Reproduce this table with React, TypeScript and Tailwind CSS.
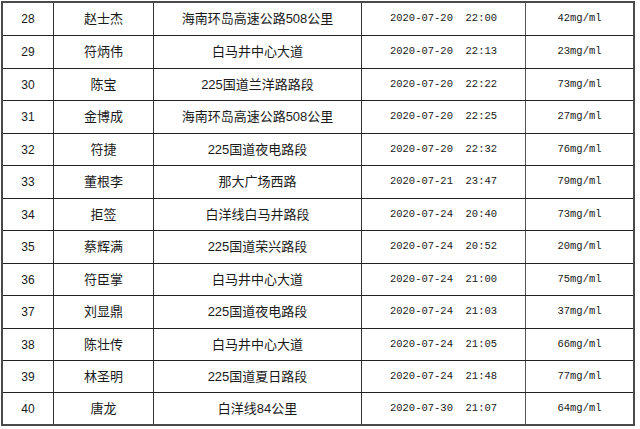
const rows: [string, string, string, string, string][] = [
  ["28", "赵士杰", "海南环岛高速公路508公里", "2020-07-20  22:00", "42mg/ml"],
  ["29", "符炳伟", "白马井中心大道", "2020-07-20  22:13", "23mg/ml"],
  ["30", "陈宝", "225国道兰洋路路段", "2020-07-20  22:22", "73mg/ml"],
  ["31", "金博成", "海南环岛高速公路508公里", "2020-07-20  22:25", "27mg/ml"],
  ["32", "符捷", "225国道夜电路段", "2020-07-20  22:32", "76mg/ml"],
  ["33", "董根李", "那大广场西路", "2020-07-21  23:47", "79mg/ml"],
  ["34", "拒签", "白洋线白马井路段", "2020-07-24  20:40", "73mg/ml"],
  ["35", "蔡辉满", "225国道荣兴路段", "2020-07-24  20:52", "20mg/ml"],
  ["36", "符臣掌", "白马井中心大道", "2020-07-24  21:00", "75mg/ml"],
  ["37", "刘显鼎", "225国道夜电路段", "2020-07-24  21:03", "37mg/ml"],
  ["38", "陈壮传", "白马井中心大道", "2020-07-24  21:05", "66mg/ml"],
  ["39", "林圣明", "225国道夏日路段", "2020-07-24  21:48", "77mg/ml"],
  ["40", "唐龙", "白洋线84公里", "2020-07-30  21:07", "64mg/ml"],
];

const cjk = "font-['Liberation_Sans','Noto_Sans_CJK_SC',sans-serif]";
const mono = "font-['Liberation_Mono','Noto_Sans_CJK_SC',monospace]";

export default function App() {
  return (
    <div className="w-[640px] h-[429px] bg-white pt-px pl-px text-[#1a1a1a]">
      <div className="w-[634px] box-border border-2 border-[#4a4a4a] flex flex-col">
        {rows.map((r, i) => (
          <div
            key={r[0]}
            className={
              "flex items-center " +
              (i === 0 ? "h-[32px]" : i % 2 === 1 && i < 11 ? "h-[33px] border-t border-[#222]" : "h-[32px] border-t border-[#222]")
            }
          >
            <div className={`w-[50px] h-full flex items-center justify-center text-[12px] ${cjk}`}>{r[0]}</div>
            <div className={`w-[100px] h-full flex items-center justify-center border-l border-[#333] text-[13px] ${cjk}`}>{r[1]}</div>
            <div className={`w-[208px] h-full flex items-center justify-center border-l border-[#333] text-[13px] ${cjk}`}>{r[2]}</div>
            <div className={`w-[164px] h-full flex items-center justify-center border-l border-[#333] text-[10.5px] whitespace-pre ${mono}`}>{r[3]}</div>
            <div className={`w-[108px] h-full flex items-center justify-center border-l border-[#555] text-[10.5px] ${mono}`}>{r[4]}</div>
          </div>
        ))}
      </div>
    </div>
  );
}
